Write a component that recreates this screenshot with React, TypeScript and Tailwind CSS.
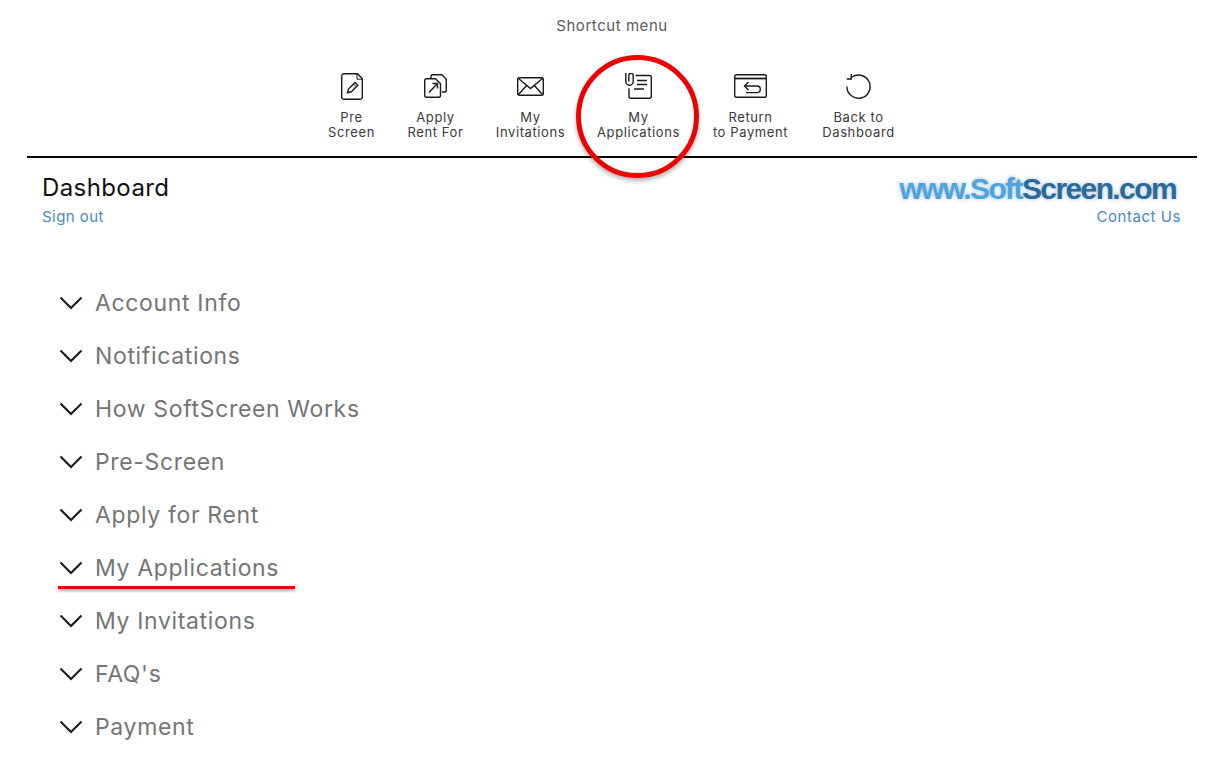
import { ReactNode } from "react";

const font = { fontFamily: '"Inter", "Liberation Sans", sans-serif' };

const PreScreenIcon = () => (
  <svg width="22" height="27" viewBox="0 0 22 27" fill="none" stroke="#1a1a1a" strokeWidth="1.4">
    <path d="M3 .7h13.500l4.800 5V24a2.300 2.300 0 0 1-2.300 2.300H3A2.300 2.300 0 0 1 .7 24V3A2.300 2.300 0 0 1 3 .7z" />
    <path d="M16 1v5.200h5" strokeWidth="1" />
    <path d="M6.500 19.800l1-3.800 6.500-6.500 2.800 2.800-6.500 6.500z" />
    <path d="M12.500 11l2.800 2.800" strokeWidth="1" />
  </svg>
);

const ApplyIcon = () => (
  <svg width="23" height="24" viewBox="0 0 23 24" fill="none" stroke="#1a1a1a" strokeWidth="1.4">
    <path d="M7 4.500V2.500A1.800 1.800 0 0 1 8.800.7h9l4.500 4.500v11a1.800 1.800 0 0 1-1.800 1.800H18" />
    <path d="M2.500 4.700h9l5 5v11.800a1.800 1.800 0 0 1-1.800 1.800H2.500a1.800 1.800 0 0 1-1.800-1.800v-15a1.800 1.800 0 0 1 1.800-1.800z" />
    <path d="M5 18.500l7.500-8M8.500 9.500h5v5" />
  </svg>
);

const MailIcon = () => (
  <svg width="27" height="19" viewBox="0 0 27 19" fill="none" stroke="#1a1a1a" strokeWidth="1.4">
    <rect x=".7" y=".7" width="25.600" height="17.600" rx="1.500" />
    <path d="M1.200 1.200L13.500 11.500 25.800 1.200M1.200 17.800L9.700 8.500M25.800 17.800L17.300 8.500" />
  </svg>
);

const ApplicationsIcon = () => (
  <svg width="27" height="26" viewBox="0 0 27 26" fill="none" stroke="#1a1a1a" strokeWidth="1.4">
    <path d="M10.500 2.500h13.800a2 2 0 0 1 2 2v18.800a2 2 0 0 1-2 2H6a2 2 0 0 1-2-2v-8" />
    <path d="M.8 0v8.500a3.700 3.700 0 0 0 7.400 0V2.600a2.200 2.200 0 0 0-4.400 0v6" />
    <path d="M12 7.500h10M12 11.500h10M9 16h10" />
  </svg>
);

const ReturnIcon = () => (
  <svg width="33" height="24" viewBox="0 0 33 24" fill="none" stroke="#1a1a1a" strokeWidth="1.4">
    <rect x=".7" y=".7" width="31.600" height="22.600" rx="1.500" />
    <path d="M1 4.500h31" strokeWidth="1.800" />
    <path d="M10.500 12h12.500a3.300 3.300 0 0 1 0 6.600H12" />
    <path d="M14.500 8l-4 4 4 4" />
  </svg>
);

const BackIcon = () => (
  <svg width="25" height="25" viewBox="0 0 25 25" fill="none" stroke="#1a1a1a" strokeWidth="1.4">
    <path d="M5.800 3.200A11.600 11.600 0 1 1 .9 12.500" />
    <path d="M5.300 0v5H0.800" />
  </svg>
);

const shortcuts: { top: string; bottom: string; icon: ReactNode; width: string }[] = [
  { top: "Pre", bottom: "Screen", icon: <PreScreenIcon />, width: "w-[84px]" },
  { top: "Apply", bottom: "Rent For", icon: <ApplyIcon />, width: "w-[84px]" },
  { top: "My", bottom: "Invitations", icon: <MailIcon />, width: "w-[106px]" },
  { top: "My", bottom: "Applications", icon: <ApplicationsIcon />, width: "w-[110px]" },
  { top: "Return", bottom: "to Payment", icon: <ReturnIcon />, width: "w-[114px]" },
  { top: "Back to", bottom: "Dashboard", icon: <BackIcon />, width: "w-[102px]" },
];

const sections = [
  "Account Info",
  "Notifications",
  "How SoftScreen Works",
  "Pre-Screen",
  "Apply for Rent",
  "My Applications",
  "My Invitations",
  "FAQ's",
  "Payment",
];

const Chevron = () => (
  <svg width="24" height="14" viewBox="0 0 24 14" fill="none" stroke="#1c1c1c" strokeWidth="2.200">
    <path d="M1.500 1.500L12 12 22.500 1.500" />
  </svg>
);

export default function App() {
  return (
    <div className="relative h-[772px] w-[1232px] overflow-hidden bg-white" style={font}>
      <div className="pl-[27px] pr-[35px]">
        <p className="pt-[17px] text-center text-[15px] leading-[18px] tracking-[0.55px] text-[#5a5a5a]">Shortcut menu</p>
        <div className="mt-[36px] flex justify-center border-b-2 border-black pb-[16px] pr-[5px]">
          {shortcuts.map((s) => (
            <div key={s.bottom} className={`${s.width} flex flex-col items-center`}>
              <div className="flex h-[30px] items-center justify-center">{s.icon}</div>
              <p className="mt-[9px] text-center text-[13px] leading-[15px] tracking-[0.6px] text-[#3a3a3a]">
                {s.top}
                <br />
                {s.bottom}
              </p>
            </div>
          ))}
        </div>
      </div>

      <div className="flex justify-between pl-[42px] pr-[51px] pt-[15px]">
        <div>
          <h1 className="text-[24px] leading-[30px] tracking-[0.4px] text-[#111]">Dashboard</h1>
          <a className="mt-[4px] block text-[15px] leading-[20px] tracking-[0.45px] text-[#4a8bbb]">Sign out</a>
        </div>
        <div className="flex flex-col items-end">
          <div
            className="mr-[5px] text-[30px] font-bold leading-[32px] tracking-[-1.6px] [text-shadow:0_0_4px_rgba(70,130,180,0.5)]"
            style={{ fontFamily: '"Liberation Sans", sans-serif' }}
          >
            <span className="text-[#4ea4dc]">www.Soft</span>
            <span className="text-[#2b6a9a]">Screen.com</span>
          </div>
          <a className="mt-[2px] text-[15px] leading-[20px] tracking-[0.55px] text-[#4a8bbb]">Contact Us</a>
        </div>
      </div>

      <div className="mt-[49px] flex flex-col pl-[59px]">
        {sections.map((label) => (
          <div key={label} className="flex h-[53px] items-center gap-[12px]">
            <Chevron />
            <span className="pt-[2px] text-[23px] tracking-[0.65px] text-[#757575]">{label}</span>
          </div>
        ))}
      </div>

      {/* red annotations */}
      <div className="absolute left-[576px] top-[55px] h-[123px] w-[123px] rounded-full border-[5px] border-[#ee0000] shadow-[0_3px_4px_rgba(0,0,0,0.3)]" />
      <div className="absolute left-[58px] top-[586px] h-[3px] w-[237px] bg-[#ee0000] shadow-[0_2px_3px_rgba(0,0,0,0.35)]" />
    </div>
  );
}
